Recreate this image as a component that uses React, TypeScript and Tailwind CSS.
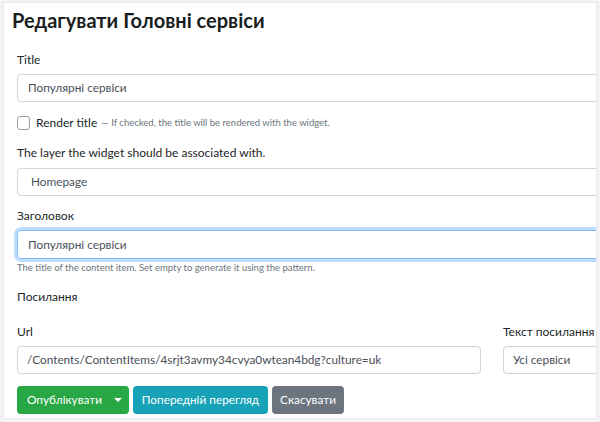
export default function App() {
  const font = { fontFamily: 'Lato, "Noto Sans", sans-serif' };
  return (
    <div
      className="h-[422px] w-[600px] overflow-hidden bg-[#f3f3f3] pl-[3px] pr-[3px] pt-[2px] pb-[3px] text-[#212529]"
      style={font}
    >
      <div className="h-full overflow-hidden border border-[#e8e8e8] bg-white">
        <h1 className="ml-[8px] mt-[3px] text-[20px] font-bold leading-[28px] text-[#1b1e21]">
          Редагувати Головні сервіси
        </h1>

        <div className="ml-[13px] mt-[17px] w-[700px]">
          <label className="block text-[12px] leading-[18px]">Title</label>
          <div className="mt-[5px] flex h-[28px] items-center rounded-[4px] border border-[#ced4da] px-[10px] text-[11.8px] text-[#495057]">
            Популярні сервіси
          </div>

          <div className="mt-[12px] flex h-[18px] items-center">
            <span className="h-[14px] w-[13px] rounded-[3px] border border-[#9aa0a6] bg-white" />
            <span className="ml-[6px] text-[12px] leading-[18px]">Render title</span>
            <span className="ml-[4px] text-[9.5px] text-[#6c757d]">
              — If checked, the title will be rendered with the widget.
            </span>
          </div>

          <label className="mt-[12px] block text-[12px] leading-[18px]">
            The layer the widget should be associated with.
          </label>
          <div className="mt-[6px] flex h-[28px] items-center rounded-[4px] border border-[#ced4da] px-[13px] text-[11.8px] text-[#495057]">
            Homepage
          </div>

          <label className="mt-[11px] block text-[12px] leading-[18px]">Заголовок</label>
          <div className="mt-[5px] flex h-[29px] items-center rounded-[4px] border border-[#80bdff] px-[10px] text-[11.8px] text-[#495057] shadow-[0_0_0_3px_rgba(0,123,255,0.25)]">
            Популярні сервіси
          </div>
          <p className="mt-[2px] text-[9.5px] leading-[14px] text-[#6c757d]">
            The title of the content item. Set empty to generate it using the pattern.
          </p>

          <p className="mt-[13px] text-[12px] leading-[18px]">Посилання</p>

          <div className="mt-[17px] flex gap-[22px]">
            <div className="w-[464px] shrink-0">
              <label className="block text-[12px] leading-[18px]">Url</label>
              <div className="mt-[5px] flex h-[28px] items-center rounded-[4px] border border-[#ced4da] px-[9px] text-[11.8px] text-[#495057]">
                /Contents/ContentItems/4srjt3avmy34cvya0wtean4bdg?culture=uk
              </div>
            </div>
            <div className="w-[180px] shrink-0">
              <label className="block whitespace-nowrap text-[12px] leading-[18px]">Текст посилання</label>
              <div className="mt-[5px] flex h-[28px] items-center rounded-[4px] border border-[#ced4da] px-[9px] text-[11.8px] text-[#495057]">
                Усі сервіси
              </div>
            </div>
          </div>

          <div className="mt-[12px] flex gap-[4px]">
            <div className="flex h-[28px] w-[112px] overflow-hidden rounded-[4px] bg-[#28a745] text-white">
              <button className="flex-1 pl-[10px] text-left text-[11.8px]">Опублікувати</button>
              <button className="flex w-[22px] items-center justify-center">
                <span className="h-0 w-0 border-x-[4px] border-t-[4px] border-x-transparent border-t-white" />
              </button>
            </div>
            <button className="h-[28px] w-[135px] rounded-[4px] bg-[#17a2b8] text-[11.8px] text-white">
              Попередній перегляд
            </button>
            <button className="h-[28px] w-[72px] rounded-[4px] bg-[#6c757d] text-[11.8px] text-white">
              Скасувати
            </button>
          </div>
        </div>
      </div>
    </div>
  );
}
